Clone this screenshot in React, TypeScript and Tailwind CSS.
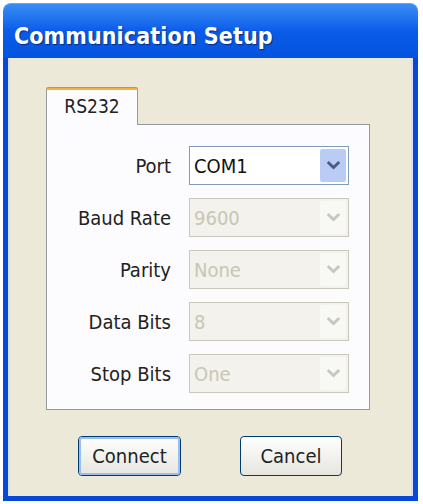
import React from "react";

const font = { fontFamily: '"DejaVu Sans Condensed", "DejaVu Sans", Tahoma, sans-serif' };

function Chevron({ color }: { color: string }) {
  return (
    <svg width="13" height="9" viewBox="0 0 13 9">
      <polyline points="1.8,2 6.5,6.6 11.2,2" fill="none" stroke={color} strokeWidth="2.8" strokeLinecap="square" />
    </svg>
  );
}

function Row({ label, value, active }: { label: string; value: string; active?: boolean }) {
  return (
    <div className="flex items-center h-[39px]">
      <div className="w-[124px] text-right text-[20px] text-[#222] leading-none pt-[1px]">{label}</div>
      <div
        className={
          "ml-[18px] w-[160px] h-[39px] flex items-stretch border " +
          (active ? "border-[#7F9DB9] bg-white" : "border-[#CAC8BB] bg-[#F3F2EC]")
        }
      >
        <div
          className={
            "flex-1 flex items-center pl-[4px] text-[20px] leading-none " +
            (active ? "text-[#111]" : "text-[#C9C6B6]")
          }
        >
          {value}
        </div>
        <div
          className={
            "my-[2px] mr-[2px] w-[26px] flex items-center justify-center rounded-[2px] " +
            (active ? "bg-[#BACCF6]" : "bg-[#F8F8F5]")
          }
        >
          <Chevron color={active ? "#4A5A80" : "#C9C7BC"} />
        </div>
      </div>
    </div>
  );
}

export default function App() {
  return (
    <div className="w-[423px] h-[504px] bg-white overflow-hidden" style={font}>
      <div className="ml-[3px] pt-[3px] w-[415px] h-[501px] flex flex-col">
        <div className="h-[55px] rounded-t-[8px] bg-gradient-to-b from-[#3A8CF6] via-[#0A5CE8] to-[#0353DE] flex items-center pl-[11px] pt-[11px] border-t border-[#5EA4FF]">
          <span className="text-white font-bold text-[23px] leading-none tracking-[0.1px] [text-shadow:1px_1px_1px_#0A2A80]">
            Communication Setup
          </span>
        </div>
        <div className="flex-1 bg-[#0748D8] px-[5px] pb-[5px] flex">
          <div className="flex-1 bg-[#ECE9D8] border-l-2 border-r-2 border-[#D6DFF5] border-b-0 flex flex-col">
            <div className="ml-[36px] mt-[29px] w-[324px] flex flex-col">
              <div className="flex">
                <div className="w-[92px] h-[38px] -mb-[1px] relative z-10 bg-[#FCFCFE] border border-[#919B9C] border-b-0 border-t-0 rounded-t-[3px] flex flex-col">
                  <div className="h-[3px] rounded-t-[3px] bg-[#F5B041] -mx-[1px] border-t border-[#E68B2C]" />
                  <div className="flex-1 flex items-center justify-center text-[19px] text-[#222] pb-[2px]">RS232</div>
                </div>
              </div>
              <div className="h-[286px] bg-[#FCFCFE] border border-[#919B9C] pt-[21px] flex flex-col gap-[13px]">
                <Row label="Port" value="COM1" active />
                <Row label="Baud Rate" value="9600" />
                <Row label="Parity" value="None" />
                <Row label="Data Bits" value="8" />
                <Row label="Stop Bits" value="One" />
              </div>
            </div>
            <div className="ml-[68px] mt-[26px] flex gap-[59px]">
              <button className="w-[103px] h-[40px] rounded-[4px] border border-[#003C74] bg-gradient-to-b from-[#FFFFFF] to-[#E6E5DE] p-0">
                <div className="w-full h-full rounded-[3px] border-2 border-[#9DBDF0] flex items-center justify-center text-[20px] text-[#222]">
                  Connect
                </div>
              </button>
              <button className="w-[102px] h-[40px] rounded-[4px] border border-[#003C74] bg-gradient-to-b from-[#FFFFFF] to-[#E6E5DE] flex items-center justify-center text-[20px] text-[#222]">
                Cancel
              </button>
            </div>
          </div>
        </div>
      </div>
    </div>
  );
}
